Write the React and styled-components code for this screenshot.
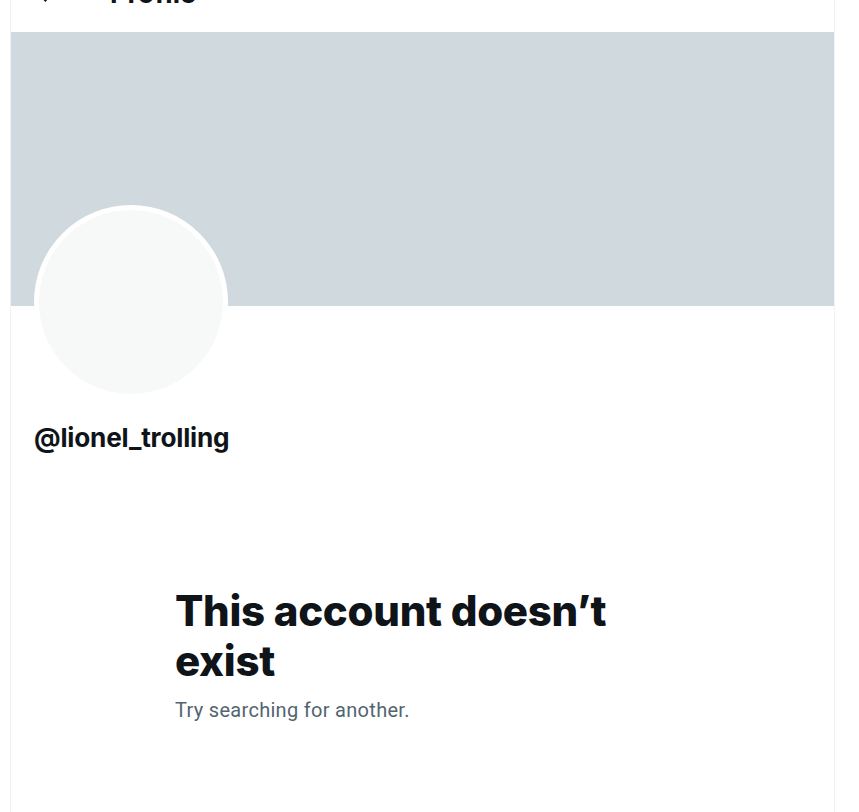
import React from 'react';
import styled, { createGlobalStyle } from 'styled-components';

const GlobalStyle = createGlobalStyle`
  html, body {
    margin: 0;
    padding: 0;
    background: #ffffff;
  }
  body {
    font-family: Inter, "Noto Sans", "Liberation Sans", sans-serif;
    color: #0f1419;
    overflow: hidden;
  }
`;

const Page = styled.div`
  height: 812px;
  overflow: hidden;
`;

const Column = styled.main`
  margin-left: 10px;
  width: 823px;
  min-height: 812px;
  border-left: 1px solid #eff3f4;
  border-right: 1px solid #eff3f4;
  display: flex;
  flex-direction: column;
`;

const Header = styled.header`
  height: 70px;
  margin-top: -38px;
  display: flex;
  align-items: center;
  gap: 50px;
  padding: 0 22px;
  background: #ffffff;
  transform: translateY(-4px);

  svg {
    width: 27px;
    height: 27px;
    fill: #0f1419;
  }
`;

const HeaderTitle = styled.h2`
  margin: 0;
  font-size: 27px;
  font-weight: 700;
  letter-spacing: 0;
`;

const Banner = styled.div`
  height: 274px;
  background: #cfd9de;
`;

const ProfileTop = styled.section`
  padding: 0 23px;
  display: flex;
  flex-direction: column;
`;

const Avatar = styled.div`
  width: 184px;
  height: 184px;
  margin-top: -101px;
  border: 5px solid #ffffff;
  border-radius: 50%;
  background: #f7f9f9;
`;

const Handle = styled.div`
  margin-top: 23px;
  font-size: 26.2px;
  font-weight: 700;
  line-height: 32px;
  letter-spacing: -0.2px;
`;

const Empty = styled.div`
  width: 495px;
  margin: 132px auto 0;
`;

const EmptyTitle = styled.h1`
  margin: 0;
  font-size: 42px;
  line-height: 50px;
  font-weight: 800;
  letter-spacing: -0.3px;
  color: #0f1419;
`;

const EmptyText = styled.p`
  margin: 11px 0 0;
  font-family: Roboto, "Liberation Sans", sans-serif;
  font-size: 20px;
  line-height: 26px;
  letter-spacing: 0.3px;
  color: #536471;
`;

export default function App() {
  return (
    <Page>
      <GlobalStyle />
      <Column>
        <Header>
          <svg viewBox="0 0 24 24" aria-hidden="true">
            <path d="M7.414 13l5.043 5.04-1.414 1.42L3.586 12l7.457-7.46 1.414 1.42L7.414 11H21v2H7.414z" />
          </svg>
          <HeaderTitle>Profile</HeaderTitle>
        </Header>
        <Banner />
        <ProfileTop>
          <Avatar />
          <Handle>@lionel_trolling</Handle>
        </ProfileTop>
        <Empty>
          <EmptyTitle>This account doesn’t exist</EmptyTitle>
          <EmptyText>Try searching for another.</EmptyText>
        </Empty>
      </Column>
    </Page>
  );
}
